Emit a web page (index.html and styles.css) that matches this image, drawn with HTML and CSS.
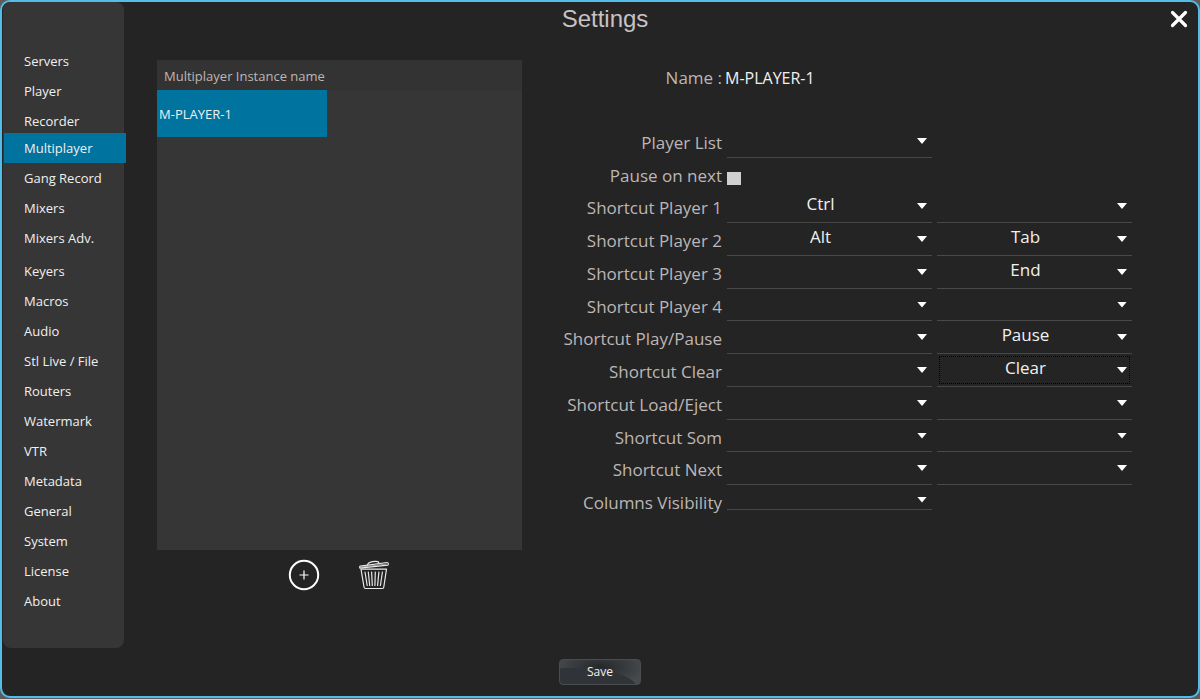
FILE: index.html
```
<!DOCTYPE html>
<html lang="en">
<head>
<meta charset="utf-8">
<title>Settings</title>
<link rel="stylesheet" href="styles.css">
</head>
<body>
<div class="window">
  <header class="titlebar">
    <h1 class="title">Settings</h1>
    <button class="close" type="button" aria-label="Close">
      <svg width="18" height="18" viewBox="0 0 18 18"><path d="M2.500 2.500L15.500 15.500M15.500 2.500L2.500 15.500" stroke="#fff" stroke-width="3.200" stroke-linecap="round"/></svg>
    </button>
  </header>

  <nav class="sidebar" aria-label="Settings sections">
    <div class="group">
      <a class="item" href="#servers">Servers</a>
      <a class="item" href="#player">Player</a>
      <a class="item" href="#recorder">Recorder</a>
    </div>
    <div class="group group-multi">
      <a class="item active" href="#multiplayer" aria-current="page">Multiplayer</a>
      <a class="item" href="#gang">Gang Record</a>
      <a class="item" href="#mixers">Mixers</a>
      <a class="item" href="#mixers-adv">Mixers Adv.</a>
    </div>
    <div class="group">
      <a class="item" href="#keyers">Keyers</a>
      <a class="item" href="#macros">Macros</a>
      <a class="item" href="#audio">Audio</a>
      <a class="item" href="#stl">Stl Live / File</a>
      <a class="item" href="#routers">Routers</a>
      <a class="item" href="#watermark">Watermark</a>
      <a class="item" href="#vtr">VTR</a>
      <a class="item" href="#metadata">Metadata</a>
      <a class="item" href="#general">General</a>
      <a class="item" href="#system">System</a>
      <a class="item" href="#license">License</a>
      <a class="item" href="#about">About</a>
    </div>
  </nav>

  <main class="content">
    <section class="instances">
      <div class="list">
        <table class="table">
          <thead><tr><th scope="col">Multiplayer Instance name</th></tr></thead>
          <tbody><tr><td>M-PLAYER-1</td></tr></tbody>
        </table>
      </div>
      <div class="actions">
        <button class="action" type="button" aria-label="Add">
          <svg width="32" height="32" viewBox="0 0 32 32" fill="none" stroke="#fff"><circle cx="16" cy="16" r="14.200" stroke-width="2"/><path d="M11.500 16H20.500M16 11.500V20.500" stroke-width="1.200"/></svg>
        </button>
        <button class="action" type="button" aria-label="Delete">
          <svg width="32" height="32" viewBox="0 0 32 32" fill="none" stroke="#e8e8e8" stroke-width="1.200" stroke-linejoin="round" stroke-linecap="round"><path d="M2.300 7.200Q1.500 7.300 1.700 8.300L2 9.200L29.700 6.200Q30.600 5.900 30.300 4.600Q30.100 3.400 29 3.500Z"/><path d="M4 8L28.500 5" stroke-width=".6"/><path d="M9.500 5.800Q10 4 12 3.400Q16 1.600 20 2.700L21 4.200" /><path d="M3 10.200H28.500L25.800 28Q25.600 29.500 24.500 29.500H7.500Q6.200 29.500 6 28Z"/><path d="M7 13L9.200 26.500M10.300 13L11.700 26.500M13.600 13L14.300 26.500M17.300 13L16.900 26.500M20.900 13L19.600 26.500M24.400 13L22.400 26.500"/></svg>
        </button>
      </div>
    </section>

    <form class="form" id="settings">
      <div class="name-row">
        <label class="label" for="name">Name :</label>
        <input class="name" id="name" type="text" value="M-PLAYER-1">
      </div>
      <div class="fields">
        <label class="label" for="plist">Player List</label>
        <span class="pick"><select id="plist"><option></option></select></span>

        <label class="label" for="pause">Pause on next</label>
        <input class="check" id="pause" type="checkbox">

        <label class="label" for="p1">Shortcut Player 1</label>
        <span class="pick"><select id="p1"><option>Ctrl</option></select></span>
        <span class="pick"><select aria-label="Shortcut Player 1 key"><option></option></select></span>

        <label class="label" for="p2">Shortcut Player 2</label>
        <span class="pick"><select id="p2"><option>Alt</option></select></span>
        <span class="pick"><select aria-label="Shortcut Player 2 key"><option>Tab</option></select></span>

        <label class="label" for="p3">Shortcut Player 3</label>
        <span class="pick"><select id="p3"><option></option></select></span>
        <span class="pick"><select aria-label="Shortcut Player 3 key"><option>End</option></select></span>

        <label class="label" for="p4">Shortcut Player 4</label>
        <span class="pick"><select id="p4"><option></option></select></span>
        <span class="pick"><select aria-label="Shortcut Player 4 key"><option></option></select></span>

        <label class="label" for="play">Shortcut Play/Pause</label>
        <span class="pick"><select id="play"><option></option></select></span>
        <span class="pick"><select aria-label="Shortcut Play/Pause key"><option>Pause</option></select></span>

        <label class="label" for="clear">Shortcut Clear</label>
        <span class="pick"><select id="clear"><option></option></select></span>
        <span class="pick focused"><select aria-label="Shortcut Clear key"><option>Clear</option></select></span>

        <label class="label" for="load">Shortcut Load/Eject</label>
        <span class="pick"><select id="load"><option></option></select></span>
        <span class="pick"><select aria-label="Shortcut Load/Eject key"><option></option></select></span>

        <label class="label" for="som">Shortcut Som</label>
        <span class="pick"><select id="som"><option></option></select></span>
        <span class="pick"><select aria-label="Shortcut Som key"><option></option></select></span>

        <label class="label" for="next">Shortcut Next</label>
        <span class="pick"><select id="next"><option></option></select></span>
        <span class="pick"><select aria-label="Shortcut Next key"><option></option></select></span>

        <label class="label" for="cols">Columns Visibility</label>
        <span class="pick"><select id="cols"><option></option></select></span>
      </div>
    </form>
  </main>

  <footer class="footer">
    <button class="save" type="submit" form="settings">Save</button>
  </footer>
</div>
</body>
</html>
```

FILE: styles.css
```
* { box-sizing: border-box; }

body {
  margin: 0;
  background: #5c5c5c;
  color: #f0f0f0;
  font-family: "Open Sans", "Noto Sans", sans-serif;
}

button, input, select { font-family: inherit; color: inherit; }
button { border: 0; padding: 0; background: none; cursor: pointer; }

.window {
  min-height: calc(100vh - 1px);
  display: grid;
  grid-template-columns: 122px 1fr;
  grid-template-rows: 58px 1fr auto;
  background: #242424;
  border: 2px solid #52bde8;
  border-radius: 10px;
}

/* The title bar spans the sidebar so that the title centres on the window. */
.titlebar {
  grid-area: 1 / 1 / 2 / 3;
  z-index: 1;
  display: grid;
  grid-template-columns: 38px 1fr 28px;
  align-items: start;
  pointer-events: none;
}
.title {
  grid-column: 2;
  margin: 0;
  padding-top: 3px;
  text-align: center;
  font: 400 24px/28px "Liberation Sans", Arial, sans-serif;
  color: #c8c2c2;
}
.close {
  height: 18px;
  margin-top: 8px;
  text-align: left;
  pointer-events: auto;
}
.close svg { display: block; }

.sidebar {
  grid-area: 1 / 1 / 3 / 2;
  margin-left: 1px;
  padding: 44px 0 32px;
  background: #363636;
  border-radius: 8px;
}
.group-multi { margin: -3px 0 3px; }
.item {
  display: block;
  margin: 0 -2px 0 1px;
  padding-left: 20px;
  font-size: 13px;
  line-height: 30px;
  color: #f0f0f0;
  text-decoration: none;
}
.active { background: #00739f; }

.content {
  grid-area: 2 / 2 / 3 / 3;
  padding: 0 66px 0 33px;
  display: grid;
  grid-template-columns: 365fr 610fr;
}
.instances { display: flex; flex-direction: column; }
.list { min-height: 490px; background: #363636; }
.table { width: 100%; border-collapse: collapse; text-align: left; }
.table tr { display: block; }
.table th {
  display: block;
  height: 30px;
  padding: 0 7px;
  background: #333;
  font-size: 13px;
  font-weight: 400;
  line-height: 32px;
  color: #bdb6b6;
}
.table td {
  display: block;
  width: 170px;
  height: 47px;
  padding: 0 2px;
  background: #00739f;
  font-size: 13px;
  line-height: 48px;
}
.actions {
  display: flex;
  justify-content: center;
  gap: 38px;
  padding: 9px 2px 0 0;
}
.action { height: 32px; }
.action svg { display: block; }

.name-row, .fields {
  display: grid;
  grid-template-columns: 200fr 205fr 195fr;
  column-gap: 5px;
}
.name-row {
  grid-template-columns: 200fr 407fr;
  column-gap: 3px;
  margin-bottom: 31px;
}
.fields {
  grid-template-rows: 33px 32px 33px 33px 33px 32px 33px 33px 33px 32px 33px 25px;
}
.label {
  grid-column: 1;
  padding-top: 2px;
  text-align: right;
  font-size: 17px;
  line-height: 32px;
  white-space: nowrap;
  color: #bdb6b6;
}
.name {
  width: 100%;
  height: 34px;
  padding: 2px 0 0;
  border: 0;
  background: none;
  font-size: 16px;
}
.check {
  appearance: none;
  width: 14px;
  height: 13px;
  margin: 14px 0 0;
  background: #d0d0d0;
}

.pick {
  display: grid;
  border-bottom: 1px solid #484848;
}
.pick select, .pick::after { grid-area: 1 / 1; }
.pick select {
  appearance: none;
  width: 100%;
  min-width: 0;
  height: 100%;
  padding: 0 18px 6px 0;
  border: 0;
  border-radius: 0;
  background: none;
  font-size: 17px;
  text-align-last: center;
  outline: 0;
}
.pick::after {
  content: "";
  align-self: center;
  justify-self: end;
  width: 10px;
  height: 6px;
  margin-right: 5px;
  background: #fff;
  clip-path: polygon(0 0, 100% 0, 50% 100%);
  pointer-events: none;
}
.focused select {
  outline: 1px dotted #000;
  outline-offset: -3px;
}

.footer {
  grid-area: 3 / 1 / 4 / 3;
  display: flex;
  justify-content: center;
  padding: 11px 0;
}
.save {
  width: 82px;
  height: 26px;
  padding-bottom: 2px;
  border: 1px solid #4a4d50;
  border-radius: 4px;
  background:
    radial-gradient(ellipse 64px 18px at 12px 26px, #303438 98%, transparent 100%),
    radial-gradient(ellipse at 50% 30%, #25282a, #464a4d 80%);
  font-size: 12px;
}
```
